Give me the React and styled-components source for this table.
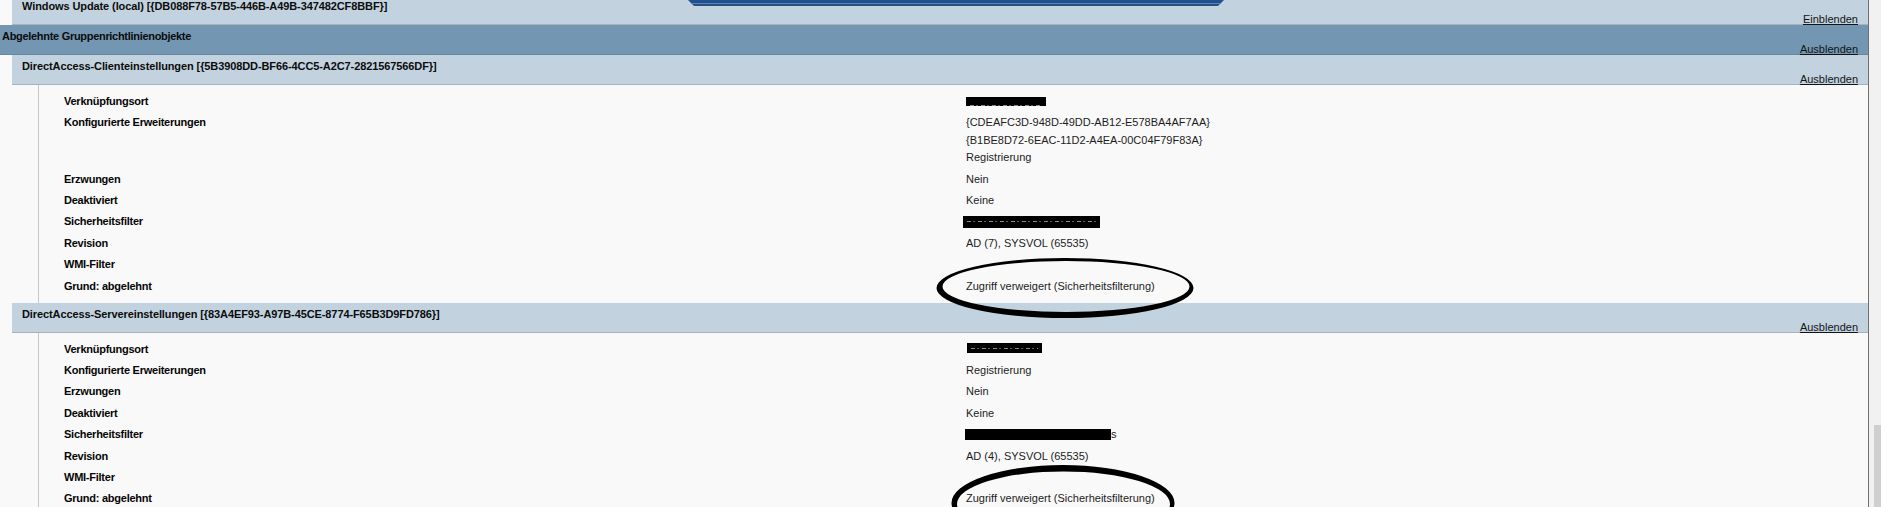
import React from 'react';
import styled, { createGlobalStyle } from 'styled-components';

const Global = createGlobalStyle`
  html, body { margin: 0; padding: 0; background: #f9f9f9; overflow: hidden; }
  body { font-family: "Liberation Sans", Arial, sans-serif; font-size: 11px; color: #111; }
  #root { width: 1881px; height: 507px; }
`;

const Viewport = styled.div`
  position: relative;
  display: flex;
  width: 1881px;
  height: 507px;
  overflow: hidden;
  background: #f9f9f9;
`;

const Report = styled.div`
  flex: 0 0 1868px;
  border-right: 1px solid #6f6f6f;
  display: flex;
  flex-direction: column;
  min-width: 0;
`;

const Scrollbar = styled.div`
  flex: 1;
  display: flex;
  flex-direction: column;
  justify-content: flex-end;
  background: #f1f1f1;
  padding-left: 5px;
`;

const Thumb = styled.div`
  height: 82px;
  background: #cfcfcf;
`;

const Header = styled.div`
  box-sizing: border-box;
  height: 30px;
  flex: 0 0 30px;
  margin-left: ${p => p.$indent}px;
  margin-top: ${p => (p.$cropped ? -5 : 0)}px;
  padding: 5px 10px 0 ${p => p.$padLeft}px;
  background: ${p => (p.$dark ? '#7397b2' : '#c2d3df')};
  border-bottom: 1px solid ${p => (p.$dark ? '#67859b' : '#a4b4bf')};
  display: flex;
  flex-direction: column;
  justify-content: space-between;
`;

const Title = styled.div`
  font-weight: bold;
  letter-spacing: ${p => (p.$tight ? -0.3 : -0.1)}px;
  line-height: 13px;
  color: #0c0c0c;
  white-space: nowrap;
`;

const Toggle = styled.a`
  align-self: flex-end;
  line-height: 12px;
  color: #141414;
  text-decoration: underline;
  cursor: pointer;
`;

const Body = styled.div`
  margin-left: 38px;
  border-left: 1px solid #c6c6c6;
  padding: 6px 0 5.5px 25px;
`;

const Row = styled.div`
  display: grid;
  grid-template-columns: 1fr 1fr;
  padding: 2px 0;
  line-height: 17.4px;
`;

const Label = styled.div`
  font-weight: bold;
  letter-spacing: -0.25px;
  color: #050505;
`;

const Value = styled.div`
  color: #1c1c1c;
  display: flex;
  flex-direction: column;
  align-items: flex-start;
`;

const Line = styled.div`
  display: flex;
  align-items: center;
  min-height: 17.4px;
`;

const Redacted = styled.span`
  display: inline-block;
  position: relative;
  width: ${p => p.$w}px;
  height: ${p => p.$h}px;
  margin-left: ${p => p.$dx || 0}px;
  margin-top: ${p => p.$dy || 0}px;
  background: #000;
  &::after {
    content: '';
    position: absolute;
    left: 4px;
    right: 4px;
    top: ${p => p.$noiseTop}px;
    height: 1px;
    background: repeating-linear-gradient(90deg, #8a8a8a 0 4px, transparent 4px 6px, #5a5a5a 6px 8px, transparent 8px 11px);
    opacity: ${p => (p.$noise ? 1 : 0)};
  }
`;

const Overlay = styled.svg`
  position: absolute;
  left: 0;
  top: 0;
  width: 1881px;
  height: 507px;
  pointer-events: none;
`;

const ellipse = (cx, cy, rx, ry) =>
  `M ${cx - rx} ${cy} a ${rx} ${ry} 0 1 0 ${2 * rx} 0 a ${rx} ${ry} 0 1 0 ${-2 * rx} 0 Z`;

const ring = (o, i) => `${ellipse(...o)} ${ellipse(...i)}`;

function Section({ title, rows }) {
  return (
    <>
      <Header $indent={12} $padLeft={10}>
        <Title>{title}</Title>
        <Toggle>Ausblenden</Toggle>
      </Header>
      <Body>
        {rows.map(([label, values], i) => (
          <Row key={i}>
            <Label>{label}</Label>
            <Value>
              {values.map((v, j) => (
                <Line key={j}>{v}</Line>
              ))}
            </Value>
          </Row>
        ))}
      </Body>
    </>
  );
}

const client = [
  ['Verknüpfungsort', [<Redacted $w={80} $h={9} $dy={-1} $noiseTop={8} $noise />]],
  [
    'Konfigurierte Erweiterungen',
    ['{CDEAFC3D-948D-49DD-AB12-E578BA4AF7AA}', '{B1BE8D72-6EAC-11D2-A4EA-00C04F79F83A}', 'Registrierung'],
  ],
  ['Erzwungen', ['Nein']],
  ['Deaktiviert', ['Keine']],
  ['Sicherheitsfilter', [<Redacted $w={137} $h={12} $dx={-3} $noiseTop={5} $noise />]],
  ['Revision', ['AD (7), SYSVOL (65535)']],
  ['WMI-Filter', ['']],
  ['Grund: abgelehnt', ['Zugriff verweigert (Sicherheitsfilterung)']],
];

const server = [
  ['Verknüpfungsort', [<Redacted $w={75} $h={10} $dx={1} $dy={-2} $noiseTop={5} $noise />]],
  ['Konfigurierte Erweiterungen', ['Registrierung']],
  ['Erzwungen', ['Nein']],
  ['Deaktiviert', ['Keine']],
  ['Sicherheitsfilter', [<><Redacted $w={146} $h={11} $dx={-1} $noiseTop={10} $noise={false} />s</>]],
  ['Revision', ['AD (4), SYSVOL (65535)']],
  ['WMI-Filter', ['']],
  ['Grund: abgelehnt', ['Zugriff verweigert (Sicherheitsfilterung)']],
];

export default function App() {
  return (
    <Viewport>
      <Global />
      <Report>
        <Header $indent={12} $padLeft={10} $cropped>
          <Title>Windows Update (local) [{'{'}DB088F78-57B5-446B-A49B-347482CF8BBF{'}'}]</Title>
          <Toggle>Einblenden</Toggle>
        </Header>
        <Header $indent={0} $padLeft={2} $dark>
          <Title $tight>Abgelehnte Gruppenrichtlinienobjekte</Title>
          <Toggle>Ausblenden</Toggle>
        </Header>
        <Section
          title="DirectAccess-Clienteinstellungen [{5B3908DD-BF66-4CC5-A2C7-2821567566DF}]"
          rows={client}
        />
        <Section
          title="DirectAccess-Servereinstellungen [{83A4EF93-A97B-45CE-8774-F65B3D9FD786}]"
          rows={server}
        />
      </Report>
      <Scrollbar>
        <Thumb />
      </Scrollbar>
      <Overlay viewBox="0 0 1881 507">
        <polygon points="688,0 1224,0 1218,6 694,6" fill="#22508f" />
        <line x1="691" y1="3.5" x2="1221" y2="3.5" stroke="#5f84b8" strokeWidth="1" />
        <line x1="694" y1="5.5" x2="1218" y2="5.5" stroke="#2d4d7c" strokeWidth="1" />
        <path
          d={ring([1065, 288, 128.5, 30], [1066, 286.5, 123.5, 25.5])}
          fill="#000"
          fillRule="evenodd"
        />
        <path
          d={ring([1063, 503, 111.5, 38], [1063.5, 504, 106.5, 32.5])}
          fill="#000"
          fillRule="evenodd"
        />
      </Overlay>
    </Viewport>
  );
}
